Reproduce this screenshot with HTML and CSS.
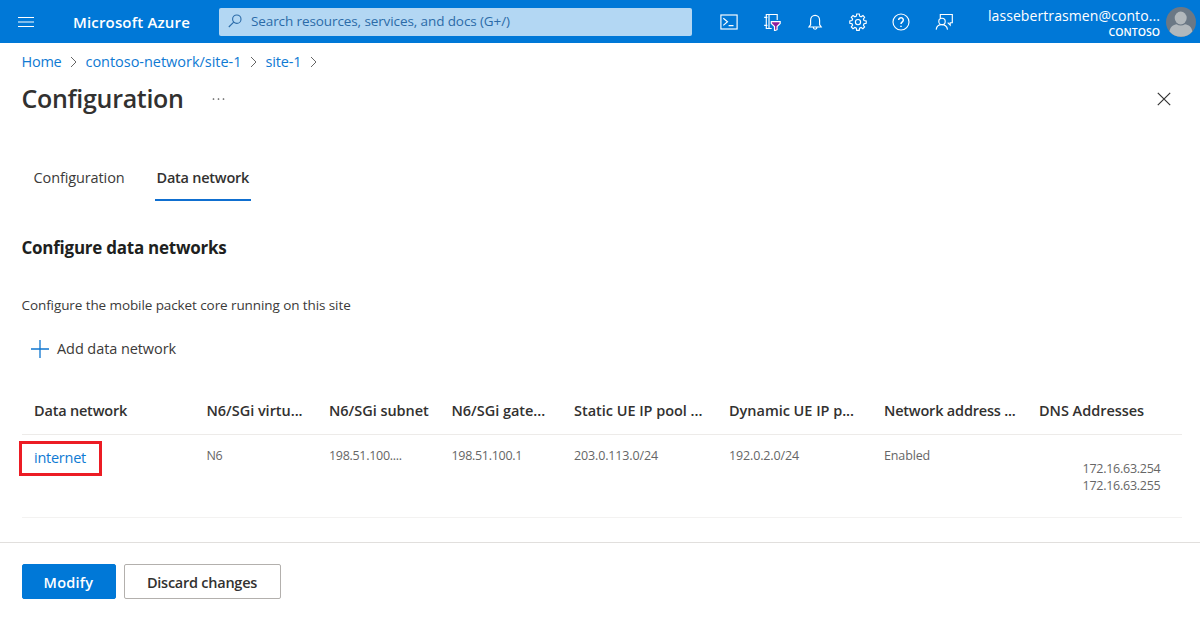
FILE: index.html
```html
<!DOCTYPE html>
<html lang="en">
<head>
<meta charset="utf-8">
<title>Configuration - Microsoft Azure</title>
<link rel="stylesheet" href="styles.css">
</head>
<body>
<header class="topbar">
  <svg class="menu" width="16" height="12" viewBox="0 0 16 12" stroke="#fff" stroke-width="1.1"><path d="M0 1.5h16M0 6h16M0 10.5h16"/></svg>
  <span class="brand">Microsoft Azure</span>
  <div class="search">
    <svg width="14" height="14" viewBox="0 0 14 14" fill="none" stroke="#2b6ba8" stroke-width="1.1"><circle cx="8.8" cy="5.2" r="4.2"/><path d="M5.7 8.2L.8 13"/></svg>
    <span class="search-text">Search resources, services, and docs (G+/)</span>
  </div>
  <nav class="tools">
    <svg viewBox="0 0 18 18"><rect x=".9" y="2" width="16.2" height="14"/><path d="M3.3 5.2l4.2 3.6-4.2 3.6M8.6 12.6h4.9"/></svg>
    <svg viewBox="0 0 18 18"><path d="M14.2 7V1.5H3.3v14h5.4M6 1.5v14M1.2 4.4h3.2M1.2 12.4h3.2"/><path class="funnel" d="M8.3 8.6h8.9v1.9l-3.1 3v3.2l-2.6 1v-4.2l-3.2-3z"/></svg>
    <svg viewBox="0 0 18 18"><path d="M3 14h12.2l-1.6-2.3V7.2a4.5 4.9 0 0 0-9 0v4.5zM7.3 14.3a1.8 1.9 0 0 0 3.6 0"/></svg>
    <svg viewBox="0 0 18 18"><path d="M7.7 1h2.6l.4 2.2 1.4.6 1.9-1.3L15.6 4.2l-1.2 1.8.6 1.5 2.2.4v2.4l-2.2.4-.6 1.5 1.2 1.8-1.7 1.7-1.8-1.2-1.5.6-.4 2.2H7.7l-.4-2.2-1.4-.6-1.9 1.2L2.3 14l1.3-1.8-.6-1.5L.8 10.3V7.9L3 7.5l.6-1.5-1.3-1.8L4 2.500l1.900 1.300 1.400-.6z"/><circle cx="9" cy="9.100" r="2.600"/></svg>
    <svg viewBox="0 0 18 18"><circle cx="9" cy="9" r="8"/><path class="bold" d="M6.700 7a2.300 2.300 0 1 1 3.800 1.700C9.500 9.500 9 9.800 9 11.100M9 12.700v1.400"/></svg>
    <svg viewBox="0 0 18 18"><path d="M5.300 5V1.500h12v8.200h-2.100v2.400l-2.500-2.400"/><circle cx="7" cy="8.400" r="3.200"/><path d="M1.200 16.600c.3-3 2.500-5 5.600-5s5.300 2 5.700 5"/></svg>
  </nav>
  <div class="account">
    <span class="email">lassebertrasmen@conto...</span>
    <span class="tenant">CONTOSO</span>
  </div>
  <svg class="avatar" width="30" height="30" viewBox="0 0 30 30"><circle cx="15" cy="15" r="15" fill="#6b7885"/><ellipse cx="14.700" cy="11" rx="6" ry="6.500" fill="#b2b8bc"/><path d="M3.500 24.500c.5-4.500 4-7 7-7.300 2.500 1.600 6 1.600 8.500 0 3.500.3 6.800 2.800 7.400 7.300A15 15 0 0 1 3.500 24.500z" fill="#b2b8bc"/></svg>
</header>

<nav class="breadcrumb">
  <a class="crumb-home">Home</a>
  <svg class="chevron" viewBox="0 0 7 12"><path d="M1 1l5 5-5 5"/></svg>
  <a class="crumb-network">contoso-network/site-1</a>
  <svg class="chevron" viewBox="0 0 7 12"><path d="M1 1l5 5-5 5"/></svg>
  <a class="crumb-site">site-1</a>
  <svg class="chevron" viewBox="0 0 7 12"><path d="M1 1l5 5-5 5"/></svg>
</nav>

<div class="title-row">
  <h1>Configuration</h1>
  <svg class="more" width="14" height="4" viewBox="0 0 14 4" fill="#555"><circle cx="1.500" cy="2" r=".85"/><circle cx="6.500" cy="2" r=".85"/><circle cx="11.500" cy="2" r=".85"/></svg>
  <svg class="close" width="14" height="14" viewBox="0 0 14 14" stroke="#333" stroke-width="1.200"><path d="M.8.8l12.400 12.400M13.200.8L.8 13.200"/></svg>
</div>

<main>
  <div class="tabs">
    <span class="tab">Configuration</span>
    <span class="tab active">Data network</span>
  </div>
  <h2>Configure data networks</h2>
  <p>Configure the mobile packet core running on this site</p>
  <div class="add">
    <svg width="18" height="18" viewBox="0 0 18 18" stroke="#0f76cf" stroke-width="1.300"><path d="M9 0v18M0 9h18"/></svg>
    <span>Add data network</span>
  </div>
  <div class="grid head">
    <span class="tight">Data network</span><span>N6/SGi virtu...</span><span>N6/SGi subnet</span><span>N6/SGi gate...</span><span>Static UE IP pool ...</span><span>Dynamic UE IP p...</span><span class="tight">Network address ...</span><span>DNS Addresses</span>
  </div>
  <div class="grid row">
    <div class="name"><a class="link">internet</a></div>
    <span>N6</span><span>198.51.100....</span><span>198.51.100.1</span><span class="wide">203.0.113.0/24</span><span class="wide">192.0.2.0/24</span><span class="wide">Enabled</span>
    <div class="dns"><span>172.16.63.254</span><span>172.16.63.255</span></div>
  </div>
</main>

<footer>
  <button class="primary">Modify</button>
  <button class="secondary">Discard changes</button>
</footer>
</body>
</html>
```

FILE: styles.css
```css
* { box-sizing: border-box; }

body {
  margin: 0;
  height: 617px;
  display: flex;
  flex-direction: column;
  overflow: hidden;
  background: #fff;
  color: #3b3a39;
  font: 14.5px/20px "Open Sans", "Noto Sans", sans-serif;
  white-space: nowrap;
}

svg { display: block; flex: none; }

.topbar {
  display: flex;
  align-items: center;
  height: 43px;
  flex: none;
  padding-left: 18px;
  background: #0078d7;
  color: #fff;
}
.brand {
  width: 146px;
  margin-left: 39px;
  padding-top: 1px;
  font-size: 15px;
  font-weight: 600;
  letter-spacing: .16px;
}
.search {
  display: flex;
  align-items: center;
  width: 473px;
  height: 28px;
  padding: 0 0 1px 9px;
  gap: 9px;
  border-radius: 2px;
  background: #b3d7f3;
  color: #2b6ba8;
}
.search-text { font-size: 13.5px; letter-spacing: -.1px; }
.tools {
  display: flex;
  gap: 25px;
  margin-left: 28px;
}
.tools svg {
  width: 18px;
  height: 18px;
  fill: none;
  stroke: #fff;
  stroke-width: 1.15;
}
.tools .bold { stroke-width: 1.5; }
.tools .funnel { fill: #8f1f9c; }
.account {
  display: flex;
  flex-direction: column;
  align-items: flex-end;
  width: 207px;
  padding-top: 2px;
}
.email { font-size: 14px; line-height: 18px; letter-spacing: .09px; }
.tenant { font-size: 10.5px; font-weight: 600; line-height: 14px; }
.avatar { margin-left: 6px; }

.breadcrumb {
  display: flex;
  align-items: center;
  flex: none;
  height: 38px;
  padding-left: 21.5px;
  color: #0f7ad3;
}
.crumb-home { width: 40px; letter-spacing: -.25px; }
.crumb-network { width: 156px; letter-spacing: -.03px; }
.crumb-site { width: 36px; letter-spacing: -.14px; }
.chevron {
  width: 7px;
  height: 12px;
  margin: 0 9px 0 8px;
  fill: none;
  stroke: #666;
}

.title-row {
  display: flex;
  align-items: center;
  flex: none;
  height: 34px;
  padding: 0 29px 0 21.5px;
}
h1 {
  width: 190px;
  margin: 0;
  font-size: 25px;
  font-weight: 600;
  line-height: 34px;
  letter-spacing: -.3px;
  color: #323130;
}
.more { margin-top: 2px; }
.close { margin: 2px 0 0 auto; }

main { flex: none; padding: 40px 19px 0 21.5px; }
.tabs { display: flex; gap: 30px; padding-left: 12px; }
.tab {
  height: 46px;
  line-height: 45px;
  letter-spacing: -.11px;
}
.tab.active {
  width: 96px;
  padding: 0 2px;
  border-bottom: 2px solid #0f6fd0;
  font-weight: 600;
  color: #323130;
  letter-spacing: -.25px;
}
h2 {
  margin: 35px 0 0;
  font-size: 17px;
  font-weight: 700;
  line-height: 24px;
  letter-spacing: -.25px;
  color: #201f1e;
}
p {
  margin: 35px 0 0;
  font-size: 13.5px;
  letter-spacing: -.09px;
}
.add {
  display: flex;
  align-items: center;
  gap: 8px;
  margin-top: 24px;
  padding-left: 9.5px;
  letter-spacing: -.08px;
}

.grid {
  display: grid;
  grid-template-columns: 172.5px 122.5px 122.5px 122.5px 155px 155px 155px 1fr;
  width: 1160px;
  padding-left: 12.5px;
}
.head {
  height: 47px;
  margin-top: 29px;
  border-bottom: 1px solid #edebe9;
  line-height: 46px;
  font-weight: 600;
  color: #323130;
  letter-spacing: -.03px;
}
.head .tight { letter-spacing: -.2px; }
.row {
  height: 83px;
  padding-top: 12px;
  border-bottom: 1px solid #f3f2f1;
  font-size: 12.5px;
  line-height: 18px;
  color: #666;
  letter-spacing: -.3px;
}
.row .wide { letter-spacing: -.14px; }
.name {
  align-self: start;
  justify-self: start;
  width: 83px;
  height: 35px;
  margin: -6px 0 0 -15px;
  padding-left: 12px;
  border: 3px solid #ec1c24;
  font-size: 14.5px;
  line-height: 28px;
  letter-spacing: -.25px;
}
.link { color: #0f7ad3; }
.dns {
  display: flex;
  flex-direction: column;
  align-items: flex-end;
  padding: 12.5px 21px 0 0;
  line-height: 17px;
  letter-spacing: -.26px;
}

footer {
  display: flex;
  flex: none;
  gap: 8px;
  margin-top: 24px;
  padding: 21px 21.5px;
  border-top: 1px solid #e1dfdd;
}
button {
  height: 35px;
  padding: 2px 0 0;
  border: 1px solid #b3b0ad;
  border-radius: 2px;
  background: #fff;
  color: #323130;
  font: 600 14.5px/20px "Open Sans", sans-serif;
  letter-spacing: -.25px;
}
.primary {
  width: 94px;
  border-color: #0078d7;
  background: #0078d7;
  color: #fff;
  letter-spacing: .25px;
}
.secondary { width: 157px; }
```
